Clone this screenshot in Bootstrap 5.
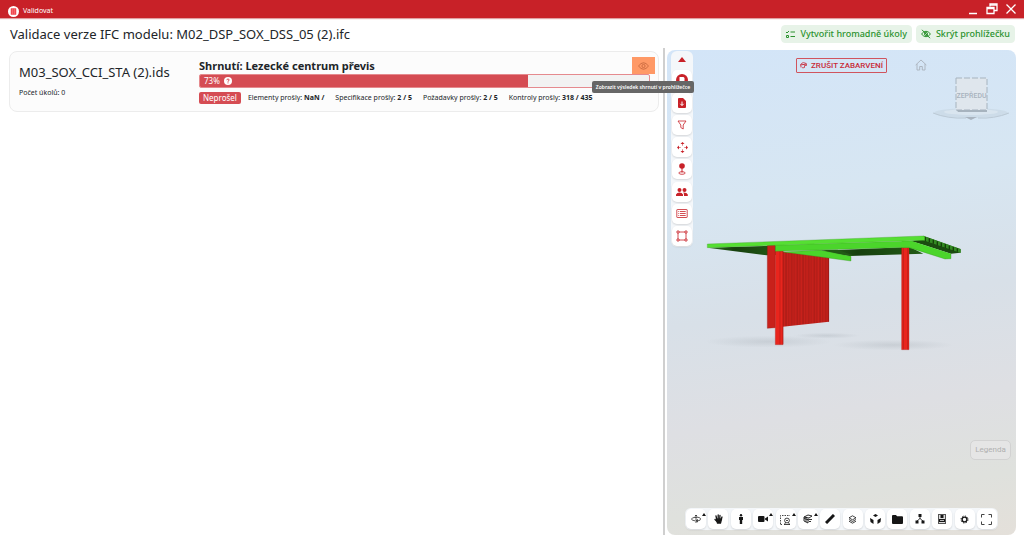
<!DOCTYPE html>
<html lang="cs">
<head>
<meta charset="utf-8">
<meta name="viewport" content="width=device-width, initial-scale=1">
<title>Validovat</title>
<link href="https://cdn.jsdelivr.net/npm/bootstrap@5.3.0/dist/css/bootstrap.min.css" rel="stylesheet">
<style>
  body { font-family: "Noto Sans", "Open Sans", sans-serif; font-size: 7px; line-height: 10px; color: #212529; }
  svg { display: block; }
  .topbar { height: 18px; background: #c82128; box-shadow: 0 1px 1px #e0a0a3; font-size: 7px; padding: 0 8px; }
  .topbar button { border: 0; background: none; padding: 0; color: #fff; }
  .titlebar { height: 32px; padding: 0 9px 0 10px; }
  .titlebar h1, .ids-name { font-size: 13px; line-height: 18px; font-weight: 400; margin: 0; }
  .btn-soft { --bs-btn-color: #2b922e; --bs-btn-bg: #e7f3e8; --bs-btn-border-color: #e7f3e8; --bs-btn-font-size: 9px; --bs-btn-line-height: 16px; --bs-btn-font-weight: 500; --bs-btn-padding-y: 0px; --bs-btn-padding-x: 4px; --bs-btn-border-radius: 4px; --bs-btn-hover-bg: #d8ecd9; --bs-btn-hover-color: #2b922e; display: flex; align-items: center; gap: 5px; }
  .results { padding: 1px 4px 0 9px; }
  .result { background: #fcfcfc; border: 1px solid #ececec; border-radius: 8px; height: 61px; padding: 5px 3px 0 9px; }
  .ids { width: 180px; padding-top: 6px; }
  .count { margin-top: 7px; }
  .summary h2 { font-size: 11px; line-height: 17px; font-weight: 700; margin: 0; }
  .eye { width: 23px; height: 17px; background: #ff9966; border: 0; padding: 0; color: #c2623a; }
  .meter { height: 14px; border: 1px solid #e58a8e; border-radius: 2px; background: #f2f2f2; margin-right: 5px; font-size: 8px; }
  .meter .progress-bar { background: #d54c53; }
  .fail { background: #d54c53; font-size: 8px; line-height: 12px; font-weight: 400; padding: 0 4px; border-radius: 2px; margin-right: 7px; }
  .stats { column-gap: 11px; white-space: nowrap; }
  .tip { right: -39px; top: 24px; width: 102px; z-index: 5; background: #666; color: #fff; border-radius: 2px; font-size: 5px; font-weight: 600; line-height: 12px; text-align: center; white-space: nowrap; }
  .split { width: 2px; background: #cfcfcf; margin: -2px 2px 0 0; }
  .viewer { width: 349px; min-height: 485px; border-radius: 8px; background: linear-gradient(172deg, #d3e5f8 0%, #d7e6f2 30%, #d8e0e8 52%, #dedfe3 72%, #dfe1dd 88%, #e4e0da 100%); overflow: hidden; }
  .tools { background: #f4f7fa; border-radius: 6px; }
  .tools button { width: 20px; height: 20px; border: 0; padding: 0; border-radius: 5px; background: #fff; color: inherit; box-shadow: 0 1px 2px #0002; display: flex; align-items: center; justify-content: center; position: relative; }
  .tools-side { left: 4px; top: 1px; width: 22px; height: 196px; padding: 0 1px 1px; color: #c82128; }
  .tools-side button:first-child { height: 17px; background: none; box-shadow: none; }
  .tools-bottom { right: 18px; bottom: 5px; width: 313px; height: 22px; padding: 0 1px; color: #161616; }
  .tools-bottom .more::after { content: ""; position: absolute; right: 0; top: 4px; border: 2px solid transparent; border-top: 0; border-bottom: 3px solid #161616; }
  .btn-reset { left: 129px; top: 8px; height: 15px; width: 91px; border: 1px solid #d0545e; background: none; color: #c82a38; font: 500 8px/13px Roboto, sans-serif; border-radius: 1px; padding: 0; }
  .home { left: 248px; top: 9px; border: 0; padding: 0; background: none; color: #a9b1bb; }
  .cube { right: 0; top: 20px; }
  .legend-btn { right: 5px; bottom: 75px; width: 41px; height: 20px; border: 1px solid #d2d2d2; border-radius: 5px; background: #e5e5e5; color: #b0b0b0; font: 8px/18px Roboto, sans-serif; padding: 0; }
  .scene { inset: 0; }
</style>
</head>
<body>
<header class="topbar d-flex align-items-center justify-content-between text-white">
  <div class="d-flex align-items-center gap-1 pt-1">
    <svg width="11" height="11" viewBox="0 0 12 12"><circle cx="6" cy="6" r="6" fill="#fff"/><rect x="3" y="2.500" width="6" height="7" rx=".6" fill="#f0444d"/><path d="M5 2.500v7M7 2.500v7" stroke="#f98a90" stroke-width=".6"/></svg>
    <span>Validovat</span>
  </div>
  <div class="d-flex align-items-center gap-2">
    <button aria-label="Minimalizovat"><svg width="10" height="12" viewBox="0 0 10 12"><path d="M1 10.500h8" stroke="currentColor" stroke-width="1.500"/></svg></button>
    <button aria-label="Obnovit"><svg width="12" height="12" viewBox="0 0 12 12" fill="none" stroke="currentColor" stroke-width="1.300"><path d="M4 3.500V1h7v6.500H8"/><path d="M1 4.500h7v6H1zM1 5.500h7M4 2h7"/></svg></button>
    <button aria-label="Zavřít"><svg width="10" height="12" viewBox="0 0 10 12"><path d="M.5 1.500l9 9M9.500 1.500l-9 9" stroke="currentColor" stroke-width="1.300"/></svg></button>
  </div>
</header>

<div class="titlebar d-flex align-items-center justify-content-between">
  <h1>Validace verze IFC modelu: M02_DSP_SOX_DSS_05 (2).ifc</h1>
  <div class="d-flex gap-1">
    <button class="btn btn-soft"><svg width="9" height="9" viewBox="0 0 9 9" fill="none" stroke="currentColor"><path d="M0 2l1 1 2-2M4.500 2H9M4.500 6.500H9"/><path d="M.5 5.500h2v2h-2z"/></svg>Vytvořit hromadně úkoly</button>
    <button class="btn btn-soft"><svg width="10" height="10" viewBox="0 0 10 10" fill="none" stroke="currentColor"><path d="M.5 5Q5-.5 9.500 5 5 10.500.5 5zM1 .8l8 8.400"/><circle cx="5" cy="5" r="1.500"/></svg>Skrýt prohlížečku</button>
  </div>
</div>

<main class="d-flex">
  <section class="results flex-grow-1">
    <article class="result d-flex">
      <div class="ids"><div class="ids-name">M03_SOX_CCI_STA (2).ids</div><div class="count">Počet úkolů: 0</div></div>
      <div class="summary flex-grow-1">
        <div class="d-flex justify-content-between position-relative">
          <h2>Shrnutí: Lezecké centrum převis</h2>
          <button class="eye d-flex align-items-center justify-content-center" aria-label="Zobrazit"><svg width="11" height="8" viewBox="0 0 11 8" fill="none" stroke="currentColor" stroke-width=".8"><path d="M.5 4Q5.500-2.500 10.500 4 5.500 10.500.5 4z"/><circle cx="5.500" cy="4" r="1.600"/></svg></button>
          <div class="tip position-absolute" role="tooltip">Zobrazit výsledek shrnutí v prohlížečce</div>
        </div>
        <div class="progress meter"><div class="progress-bar d-flex flex-row align-items-center justify-content-start gap-1 ps-1" style="width:73%"><span>73%</span><svg width="8" height="8" viewBox="0 0 8 8"><circle cx="4" cy="4" r="4" fill="#fff"/><path d="M2.800 3.200Q2.900 2 4 2t1.200 1Q5.200 3.700 4 4.100v.6M4 5.400v1" fill="none" stroke="#d54c53"/></svg></div></div>
        <div class="d-flex align-items-center pt-1">
          <span class="badge fail">Neprošel</span>
          <div class="stats d-flex"><span>Elementy prošly: <b>NaN /</b></span><span>Specifikace prošly: <b>2 / 5</b></span><span>Požadavky prošly: <b>2 / 5</b></span><span>Kontroly prošly: <b>318 / 435</b></span></div>
        </div>
      </div>
    </article>
  </section>
  <div class="split"></div>
  <section class="viewer position-relative me-2">
    <svg class="scene position-absolute w-100 h-100" viewBox="0 0 349 485">
      <defs>
        <pattern id="slats" width="17" height="10" patternUnits="userSpaceOnUse"><rect width="17" height="10" fill="#c8211b"/><path d="M3 0v10" stroke="#8e1713" stroke-width="2"/><path d="M11 0v10" stroke="#ab1c17" stroke-width="3"/></pattern>
        <linearGradient id="dark"><stop stop-color="#2f6f22"/><stop offset=".4" stop-color="#17400e"/><stop offset="1" stop-color="#225a16"/></linearGradient>
        <radialGradient id="shade"><stop stop-color="#9ea6ad" stop-opacity=".3"/><stop offset="1" stop-color="#9ea6ad" stop-opacity="0"/></radialGradient>
      </defs>
      <g transform="translate(33 175) scale(.3333)">
        <ellipse cx="205" cy="350" rx="190" ry="18" fill="url(#shade)"/>
        <ellipse cx="380" cy="332" rx="100" ry="9" fill="url(#shade)"/>
        <ellipse cx="580" cy="360" rx="180" ry="16" fill="url(#shade)"/>
        <path d="M22 68L230 62v28l-30 1z" fill="url(#dark)"/>
        <path d="M340 78l290-12 40 20-220 7z" fill="url(#dark)"/>
        <path d="M202 60h24v248l-24 2z" fill="#c8211b" stroke="#8e1713"/>
        <path d="M248 80l139 14v196l-139 15z" fill="url(#slats)"/>
        <path d="M386 96v194" stroke="#8e1713" stroke-width="2"/>
        <path d="M250 81l110-6 93 19v14z" fill="#4bd52b" stroke="#398f25"/>
        <path d="M360 74l93 19 10-1-50-18z" fill="#225a16"/>
        <path d="M226 76h23v283h-23z" fill="#e9251d" stroke="#a41b16"/>
        <path d="M240 78v280M249 78v280" stroke="#a41b16" stroke-width="1.500"/>
        <path d="M605 66h22v308h-22z" fill="#e9251d" stroke="#a41b16"/>
        <path d="M610 68v305M623 68v305" stroke="#b01c17" stroke-width="2"/>
        <path d="M670 32l112 40v12l-152-36 40-4z" fill="#287019"/>
        <path d="M635 48l36-3 110 38-28 3z" fill="#1b4b10"/>
        <path d="M670 33l112 40v10l-112-37z" fill="#338a22"/>
        <path d="M676 36v12M688 40v12M700 44v12M712 49v12M724 53v12M736 57v12M748 62v12M760 66v12M772 70v10" stroke="#154109" stroke-width="4"/>
        <path d="M605 48h30l118 38v15l-18 1-108-34h-22z" fill="#4bd52b"/>
        <path d="M226 60l401-12v19l-401 12z" fill="#4bd52b"/>
        <path d="M226 60v19l401-12 108 35 18-1V86" fill="none" stroke="#398f25"/>
        <path d="M22 57l646-24 6 1v12l-448 15-204 7z" fill="#55df32" stroke="#429c2c"/>
      </g>
    </svg>
    <div class="tools tools-side position-absolute d-flex flex-column justify-content-between">
      <button aria-label="Sbalit"><svg width="8" height="5" viewBox="0 0 8 5"><path d="M0 5l4-5 4 5z" fill="currentColor"/></svg></button>
      <button aria-label="Modely"><svg width="12" height="12" viewBox="0 0 12 12"><circle cx="6" cy="6" r="6" fill="currentColor"/><path d="M3.500 3h4l1 1v5h-5z" fill="#fff"/></svg></button>
      <button aria-label="Export"><svg width="8" height="10" viewBox="0 0 8 10"><path d="M0 1q0-1 1-1h4l3 3v6q0 1-1 1H1q-1 0-1-1z" fill="currentColor"/><path d="M4 3.500v4M2.300 5.800L4 7.500l1.700-1.700" fill="none" stroke="#fff"/></svg></button>
      <button aria-label="Filtr"><svg width="10" height="10" viewBox="0 0 10 10" fill="none" stroke="currentColor" stroke-width=".8"><path d="M1 1h8L6.200 5v4L3.800 7.500V5z"/></svg></button>
      <button aria-label="Posun"><svg width="11" height="11" viewBox="0 0 11 11" fill="currentColor"><path d="M5.500 0l2 2h-4zM5.500 11l2-2h-4zM0 5.500l2-2v4zM11 5.500l-2-2v4z"/><path d="M5.500 2v1.700M5.500 7.300V9M2 5.500h1.700M7.300 5.500H9" stroke="currentColor" stroke-width=".6"/></svg></button>
      <button aria-label="Bod"><svg width="8" height="12" viewBox="0 0 8 12"><circle cx="4" cy="3" r="2.800" fill="currentColor"/><path d="M4 5v4.500" stroke="currentColor"/><ellipse cx="4" cy="10" rx="3.200" ry="1.300" fill="none" stroke="currentColor" stroke-width=".8"/></svg></button>
      <button aria-label="Uživatelé"><svg width="12" height="10" viewBox="0 0 12 10" fill="currentColor"><circle cx="3.500" cy="3" r="2"/><circle cx="8.500" cy="3" r="2"/><path d="M0 9V7.500Q1 5.500 3.500 5.500T7 7.500V9zM7.500 9h4.300V7.500Q11 5.500 7.300 5.600q.8 1 .7 3.400z"/></svg></button>
      <button aria-label="Seznam"><svg width="12" height="9" viewBox="0 0 12 9" fill="none" stroke="currentColor" stroke-width=".8"><rect x=".8" y=".5" width="10.400" height="8" rx=".5"/><path d="M2.300 2.500h.9M2.300 4.500h.9M2.300 6.500h.9M4 2.500h5.700M4 4.500h5.700M4 6.500h5.700"/></svg></button>
      <button aria-label="Výřez"><svg width="12" height="12" viewBox="0 0 12 12" fill="none" stroke="currentColor" stroke-width=".8"><path d="M2 3v6M10 3v6M3 2h6M3 10h6"/><path d="M1 1h2v2H1zM9 1h2v2H9zM1 9h2v2H1zM9 9h2v2H9z"/></svg></button>
    </div>
    <button class="btn-reset position-absolute d-flex align-items-center justify-content-center gap-1"><svg width="7" height="7" viewBox="0 0 7 7" fill="none" stroke="currentColor" stroke-width=".8"><path d="M1 5.500Q0 1 3.500.6 7 .8 6.500 3.500H4.500v2q-2 1-2.700-.5M0 3l7-1M2.500 2.500h2"/></svg>ZRUŠIT ZABARVENÍ</button>
    <button class="home position-absolute" aria-label="Domů"><svg width="12" height="12" viewBox="0 0 12 12" fill="none" stroke="currentColor" stroke-width=".9"><path d="M.7 6L6 1l5.300 5M2 5v6h2.700V7.500h2.600V11H10V5"/></svg></button>
    <svg class="cube position-absolute" width="85" height="55" viewBox="0 0 85 55">
      <ellipse cx="40" cy="43" rx="37" ry="5" fill="#c7d5e1" fill-opacity=".6"/><ellipse cx="40" cy="42" rx="27" ry="3" fill="#d9e5ef"/>
      <path d="M2 43q15 6 33 5M78 43q-15 6-31 5" fill="none" stroke="#bccad6"/><path d="M34 47h12l-6 3z" fill="#a9b4bf"/>
      <path d="M25 39h31v3H27z" fill="#a7b3be"/><path d="M25 8h31v32H25z" fill="#dfe6ed" stroke="#a6b3be" stroke-dasharray="6 2"/>
      <text x="40.500" y="28" text-anchor="middle" font-family="Roboto, sans-serif" font-size="7" font-weight="500" fill="#a7b2bd">ZEPŘEDU</text>
    </svg>
    <button class="legend-btn position-absolute">Legenda</button>
    <div class="tools tools-bottom position-absolute d-flex align-items-center justify-content-between">
      <button class="more" aria-label="Orbit"><svg width="10" height="10" viewBox="0 0 10 10" fill="none" stroke="currentColor" stroke-width=".7"><path d="M4 6.800Q.5 6.500.5 5T5 3.300 9.500 5 6.500 6.800M5 1v8M3.800 2.200L5 1l1.200 1.200M6.500 5.500v2.500L5 6.800z"/></svg></button>
      <button aria-label="Posunout"><svg width="9" height="10" viewBox="0 0 9 10" fill="none" stroke="currentColor" stroke-width="1.300" stroke-linecap="round"><path d="M2.800 5.500L2 2M4.200 5V1M5.700 5L6 1.300M7 5.500L8 3M3 7.500L1 5.500"/><path d="M2.500 5.200h5L6.500 9h-3z" fill="currentColor"/></svg></button>
      <button aria-label="Chůze"><svg width="6" height="10" viewBox="0 0 6 10" fill="currentColor"><circle cx="3" cy="1.300" r="1.200"/><path d="M1 3h4v3h-.8v4H1.800V6H1z"/></svg></button>
      <button class="more" aria-label="Kamera"><svg width="10" height="8" viewBox="0 0 10 8" fill="currentColor"><rect y="1" width="6.500" height="6" rx="1"/><path d="M7 3.500l3-2v5l-3-2z"/></svg></button>
      <button class="more" aria-label="Výběr"><svg width="11" height="11" viewBox="0 0 11 11" fill="none" stroke="currentColor" stroke-width=".8"><path d="M.5 10V1.500H10M.5 10.500H3" stroke-dasharray="1.500 1"/><circle cx="7" cy="6.500" r="2.400"/><path d="M6 6.500h2M4.500 10.500l1-2M9.500 10.500l-1-2M4 10.500h6"/></svg></button>
      <button class="more" aria-label="Řez"><svg width="10" height="10" viewBox="0 0 10 10" fill="none" stroke="currentColor" stroke-width=".9"><path d="M1 3l4-2 4 1-3 2zM1 3v4l4 2V4.500M1 4.500l5 1.500M6 5.500h3M6 7.500h2M3 3v5"/></svg></button>
      <button aria-label="Měření"><svg width="10" height="10" viewBox="0 0 10 10"><path d="M1 9l8-8" stroke="currentColor" stroke-width="3"/></svg></button>
      <button aria-label="Vrstvy"><svg width="9" height="9" viewBox="0 0 9 9" fill="none" stroke="currentColor" stroke-width=".8"><path d="M4.500.8L8 2.800l-3.500 2L1 2.800zM1 4.500l3.500 2 3.500-2M1 6.200l3.500 2 3.500-2"/></svg></button>
      <button aria-label="Rozložit"><svg width="11" height="10" viewBox="0 0 11 10" fill="currentColor"><path d="M5.500 0L8 1.500 5.500 3 3 1.500zM0 4l3.500 2v4L.5 8zM11 4L7.500 6v4l3-2z"/></svg></button>
      <button aria-label="Složka"><svg width="11" height="9" viewBox="0 0 11 9" fill="currentColor"><path d="M0 1q0-1 1-1h3l1 1.300h5q1 0 1 1V8q0 1-1 1H1Q0 9 0 8z"/></svg></button>
      <button aria-label="Struktura"><svg width="10" height="10" viewBox="0 0 10 10" fill="currentColor"><path d="M3.500 0h3v3h-3zM.5 6.500h3v3h-3zM6.500 6.500h3v3h-3z"/><path d="M5 3v2M2 7l3-2.500L8 7" fill="none" stroke="currentColor" stroke-width=".8"/></svg></button>
      <button aria-label="Vlastnosti"><svg width="8" height="10" viewBox="0 0 8 10"><rect x=".5" y=".5" width="7" height="9" fill="#ddd" stroke="#555"/><path d="M2.500 1h3v3h-3zM1 5h6v3H1z" fill="currentColor"/><path d="M2 6.500h4" stroke="#fff" stroke-width=".7"/></svg></button>
      <button aria-label="Nastavení"><svg width="9" height="9" viewBox="0 0 9 9" fill="none" stroke="currentColor"><circle cx="4.500" cy="4.500" r="2.400" stroke-width="1.400"/><circle cx="4.500" cy="4.500" r="3.500" stroke-dasharray="1.300 1.450"/></svg></button>
      <button aria-label="Celá obrazovka"><svg width="11" height="11" viewBox="0 0 11 11" fill="none" stroke="#444"><path d="M.5 3.500v-3h3M7.500.5h3v3M10.500 7.500v3h-3M3.500 10.500h-3v-3"/></svg></button>
    </div>
  </section>
</main>
<script src="https://cdn.jsdelivr.net/npm/bootstrap@5.3.0/dist/js/bootstrap.bundle.min.js"></script>
</body>
</html>
